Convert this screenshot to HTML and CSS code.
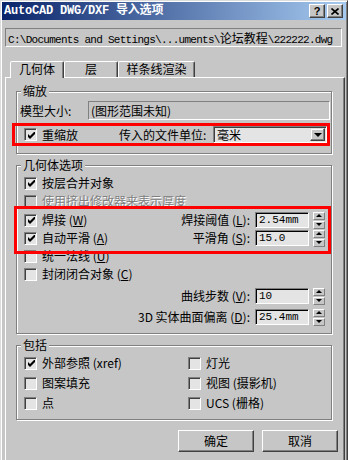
FILE: index.html
```html
<!DOCTYPE html>
<html lang="zh">
<head>
  <meta charset="UTF-8">
  <title>AutoCAD DWG/DXF 导入选项</title>
  <link rel="stylesheet" href="styles.css">
</head>
<body>
  <div class="window">
    <div class="titlebar">
      <span class="title">AutoCAD DWG/DXF 导入选项</span>
      <div class="title-btns">
        <span class="tbtn">?</span>
        <span class="tbtn">
          <svg width="8" height="7" viewBox="0 0 8 7"><path d="M0.5 0.5 L7.5 6.5 M7.5 0.5 L0.5 6.5" stroke="#000" stroke-width="1.6"/></svg>
        </span>
      </div>
    </div>

    <div class="path">C:\Documents and Settings\...uments\<span class="cjk">论坛教程</span>\222222.dwg</div>

    <div class="tabs">
      <div class="tab active">几何体</div>
      <div class="tab">层</div>
      <div class="tab wide">样条线渲染</div>
    </div>

    <div class="panel">
      <!-- scale -->
      <div class="group g-scale">
        <span class="group-title">缩放</span>
        <div class="model-size">
          <span class="lbl">模型大小:</span>
          <div class="field disabled">(图形范围未知)</div>
        </div>
        <div class="mark mark-scale">
          <span class="cb on"><svg width="7" height="7" viewBox="0 0 7 7"><path d="M0 2 L2 4 L7 -1 L7 2 L2 7 L0 5 Z"/></svg></span>
          <span class="cb-label">重缩放</span>
          <span class="units-label">传入的文件单位:</span>
          <div class="select">
            <span>毫米</span>
            <span class="select-btn"><i class="tri-down"></i></span>
          </div>
        </div>
      </div>

      <!-- geometry options -->
      <div class="group g-geo">
        <span class="group-title">几何体选项</span>
        <div class="cbrow">
          <span class="cb on"><svg width="7" height="7" viewBox="0 0 7 7"><path d="M0 2 L2 4 L7 -1 L7 2 L2 7 L0 5 Z"/></svg></span>
          <span class="cb-label">按层合并对象</span>
        </div>
        <div class="cbrow disabled">
          <span class="cb"></span>
          <span class="cb-label">使用挤出修改器来表示厚度</span>
        </div>
        <div class="mark mark-weld">
          <div class="cbrow">
            <span class="cb on"><svg width="7" height="7" viewBox="0 0 7 7"><path d="M0 2 L2 4 L7 -1 L7 2 L2 7 L0 5 Z"/></svg></span>
            <span class="cb-label">焊接 (<u>W</u>)</span>
            <div class="num">
              <span>焊接阈值 (<u>L</u>):</span>
              <span class="num-field">2.54mm</span>
              <span class="spin"><span><i class="tri-up"></i></span><span><i class="tri-down small"></i></span></span>
            </div>
          </div>
          <div class="cbrow">
            <span class="cb on"><svg width="7" height="7" viewBox="0 0 7 7"><path d="M0 2 L2 4 L7 -1 L7 2 L2 7 L0 5 Z"/></svg></span>
            <span class="cb-label">自动平滑 (<u>A</u>)</span>
            <div class="num">
              <span>平滑角 (<u>S</u>):</span>
              <span class="num-field">15.0</span>
              <span class="spin"><span><i class="tri-up"></i></span><span><i class="tri-down small"></i></span></span>
            </div>
          </div>
        </div>
        <div class="cbrow after-mark">
          <span class="cb"></span>
          <span class="cb-label">统一法线 (<u>U</u>)</span>
        </div>
        <div class="cbrow">
          <span class="cb"></span>
          <span class="cb-label">封闭闭合对象 (<u>C</u>)</span>
        </div>
        <div class="numrow">
          <span>曲线步数 (<u>V</u>):</span>
          <span class="num-field">10</span>
          <span class="spin"><span><i class="tri-up"></i></span><span><i class="tri-down small"></i></span></span>
        </div>
        <div class="numrow">
          <span>3D 实体曲面偏离 (<u>D</u>):</span>
          <span class="num-field">25.4mm</span>
          <span class="spin"><span><i class="tri-up"></i></span><span><i class="tri-down small"></i></span></span>
        </div>
      </div>

      <!-- include -->
      <div class="group g-inc">
        <span class="group-title">包括</span>
        <div class="cbrow">
          <span class="cb on"><svg width="7" height="7" viewBox="0 0 7 7"><path d="M0 2 L2 4 L7 -1 L7 2 L2 7 L0 5 Z"/></svg></span>
          <span class="cb-label">外部参照 (xref)</span>
        </div>
        <div class="cbrow">
          <span class="cb"></span>
          <span class="cb-label">灯光</span>
        </div>
        <div class="cbrow">
          <span class="cb"></span>
          <span class="cb-label">图案填充</span>
        </div>
        <div class="cbrow">
          <span class="cb"></span>
          <span class="cb-label">视图 (摄影机)</span>
        </div>
        <div class="cbrow">
          <span class="cb"></span>
          <span class="cb-label">点</span>
        </div>
        <div class="cbrow">
          <span class="cb"></span>
          <span class="cb-label">UCS (栅格)</span>
        </div>
      </div>

      <div class="actions">
        <span class="btn">确定</span>
        <span class="btn">取消</span>
      </div>
    </div>
  </div>
</body>
</html>
```

FILE: styles.css
```css
body {
  margin: 0;
  background: #c6c6c6;
  font-family: "Noto Sans CJK SC", sans-serif;
  font-size: 12px;
  line-height: 14px;
  color: #000;
}
.window {
  width: 348px;
  height: 460px;
  box-sizing: border-box;
  border: 1px solid;
  border-color: #dcdcdc #404040 #404040 #dcdcdc;
  border-bottom: none;
  padding: 1px;
  box-shadow: inset 1px 1px #fff, inset -1px 0 #808080;
  overflow: hidden;
}
.titlebar {
  height: 18px;
  display: flex;
  align-items: center;
  justify-content: space-between;
  padding: 0 3px 0 2px;
  background: linear-gradient(to right, #0a246a, #a6caf0);
}
.title {
  color: #fff;
  font-family: "Liberation Mono", "Noto Sans CJK SC", monospace;
  font-weight: bold;
  font-size: 12px;
  letter-spacing: -0.2px;
  white-space: nowrap;
}
.title-btns {
  display: flex;
  gap: 2px;
}
.tbtn {
  width: 16px;
  height: 14px;
  box-sizing: border-box;
  background: #c6c6c6;
  border: 1px solid;
  border-color: #fff #404040 #404040 #fff;
  box-shadow: inset -1px -1px #808080;
  display: flex;
  align-items: center;
  justify-content: center;
  font: bold 11px/12px "Liberation Sans", sans-serif;
}
.path {
  margin: 8px 0 0 3px;
  width: 337px;
  height: 19px;
  box-sizing: border-box;
  border: 1px solid;
  border-color: #808080 #fff #fff #808080;
  padding: 1px 0 0 2px;
  font-family: "Liberation Mono", "Noto Sans CJK SC", monospace;
  font-size: 11px;
  line-height: 15px;
  letter-spacing: -0.72px;
  white-space: nowrap;
  overflow: hidden;
}
.path .cjk {
  font-family: "Noto Sans CJK SC", sans-serif;
  font-size: 12px;
  letter-spacing: 0;
}

/* tabs */
.tabs {
  display: flex;
  margin: 14px 0 0 8px;
  height: 16px;
}
.tab {
  width: 54px;
  height: 16px;
  box-sizing: border-box;
  border: 1px solid;
  border-bottom: none;
  border-color: #fff #404040 transparent #fff;
  box-shadow: inset -1px 0 #808080;
  border-radius: 2px 2px 0 0;
  text-align: center;
  line-height: 14px;
}
.tab.wide {
  width: 77px;
}
.tab.active {
  height: 17px;
  position: relative;
  z-index: 1;
  background: #c6c6c6;
}
.panel {
  margin-left: 3px;
  width: 340px;
  height: 400px;
  box-sizing: border-box;
  border: 1px solid;
  border-color: #fff #404040 transparent #fff;
  box-shadow: inset -1px 0 #808080;
  padding: 0 6px 0 10px;
}

/* group boxes */
.group {
  position: relative;
  width: 316px;
  box-sizing: border-box;
  border: 1px solid #808080;
  box-shadow: inset 1px 1px #fff, 1px 1px #fff;
  padding: 0 1px 0 3px;
}
.group-title {
  position: absolute;
  top: -8px;
  left: 4px;
  padding: 0 2px;
  background: #c6c6c6;
}
.g-scale {
  margin-top: 13px;
  padding-bottom: 7px;
}
.g-geo {
  margin-top: 11px;
  padding-top: 8px;
  padding-bottom: 8px;
}
.g-inc {
  margin-top: 11px;
  padding-top: 7px;
  padding-bottom: 6px;
  display: grid;
  grid-template-columns: 164px 1fr;
  grid-auto-rows: 20px;
}

/* red annotation boxes */
.mark {
  border: 3px solid #f00;
  box-sizing: border-box;
  position: relative;
  z-index: 1;
}
.mark-scale {
  margin: 3px 0 0 -8px;
  width: 318px;
  height: 23px;
  display: flex;
  align-items: center;
}
.mark-scale .cb {
  margin-left: 9px;
}
.mark-weld {
  margin: -4px 0 0 -6px;
  width: 317px;
  padding: 2px 3px 4px 3px;
}

.model-size {
  margin-top: 9px;
  height: 19px;
  display: flex;
  align-items: center;
}
.lbl {
  width: 68px;
}
.field {
  flex: 1;
  height: 19px;
  box-sizing: border-box;
  border: 1px solid;
  border-color: #808080 #fff #fff #808080;
  padding-left: 2px;
  line-height: 17px;
}
.units-label {
  margin-left: 41px;
}
.select {
  margin-left: auto;
  width: 114px;
  height: 17px;
  box-sizing: border-box;
  display: flex;
  align-items: center;
  border: 1px solid;
  border-color: #808080 #fff #fff #808080;
  box-shadow: inset 1px 1px #404040;
  background: #e4e4e4;
  padding: 0 1px 0 3px;
}
.select-btn {
  margin-left: auto;
  width: 15px;
  height: 13px;
  box-sizing: border-box;
  background: #c6c6c6;
  border: 1px solid;
  border-color: #e0e0e0 #404040 #404040 #e0e0e0;
  box-shadow: inset -1px -1px #808080, inset 1px 1px #fff;
  display: flex;
  align-items: center;
  justify-content: center;
}
.tri-down {
  width: 0;
  height: 0;
  border-left: 4px solid transparent;
  border-right: 4px solid transparent;
  border-top: 4px solid #000;
}
.tri-down.small,
.tri-up {
  border-left-width: 3px;
  border-right-width: 3px;
}
.tri-down.small {
  border-top-width: 3px;
}
.tri-up {
  width: 0;
  height: 0;
  border-left: 3px solid transparent;
  border-right: 3px solid transparent;
  border-bottom: 3px solid #000;
}

/* checkboxes */
.cbrow {
  display: flex;
  align-items: center;
  height: 18px;
  padding-left: 4px;
}
.g-inc .cbrow {
  height: 20px;
}
.cbrow.after-mark {
  margin-top: -7px;
}
.cb {
  width: 13px;
  height: 13px;
  box-sizing: border-box;
  flex: none;
  border: 1px solid;
  border-color: #808080 #fff #fff #808080;
  box-shadow: inset 1px 1px #404040;
  background: #e4e4e4;
  display: flex;
  align-items: center;
  justify-content: center;
  padding: 1px 0 0 1px;
}
.cb-label {
  margin-left: 5px;
  white-space: nowrap;
}
.cbrow.disabled .cb {
  background: #c6c6c6;
}
.cbrow.disabled .cb-label {
  color: #808080;
  text-shadow: 1px 1px #fff;
}

/* numeric inputs */
.num {
  margin-left: auto;
  display: flex;
  align-items: center;
}
.numrow {
  margin-top: 5px;
  height: 16px;
  display: flex;
  align-items: center;
  justify-content: flex-end;
  padding-right: 5px;
}
.num-field {
  width: 54px;
  height: 16px;
  box-sizing: border-box;
  margin-left: 5px;
  border: 1px solid;
  border-color: #808080 #fff #fff #808080;
  box-shadow: inset 1px 1px #000;
  background: #e4e4e4;
  padding: 1px 0 0 3px;
  font-family: "Liberation Mono", monospace;
  font-size: 11px;
  line-height: 13px;
}
.spin {
  margin-left: 4px;
  width: 12px;
  height: 17px;
  display: flex;
  flex-direction: column;
  gap: 1px;
}
.spin span {
  flex: 1;
  box-sizing: border-box;
  border: 1px solid;
  border-color: #fff #808080 #808080 #fff;
  display: flex;
  align-items: center;
  justify-content: center;
}

/* buttons */
.actions {
  margin-top: 10px;
  display: flex;
  justify-content: flex-end;
  gap: 8px;
}
.btn {
  width: 76px;
  height: 22px;
  box-sizing: border-box;
  border: 1px solid;
  border-color: #fff #404040 #404040 #fff;
  box-shadow: inset -1px -1px #808080;
  display: flex;
  align-items: center;
  justify-content: center;
}
```
